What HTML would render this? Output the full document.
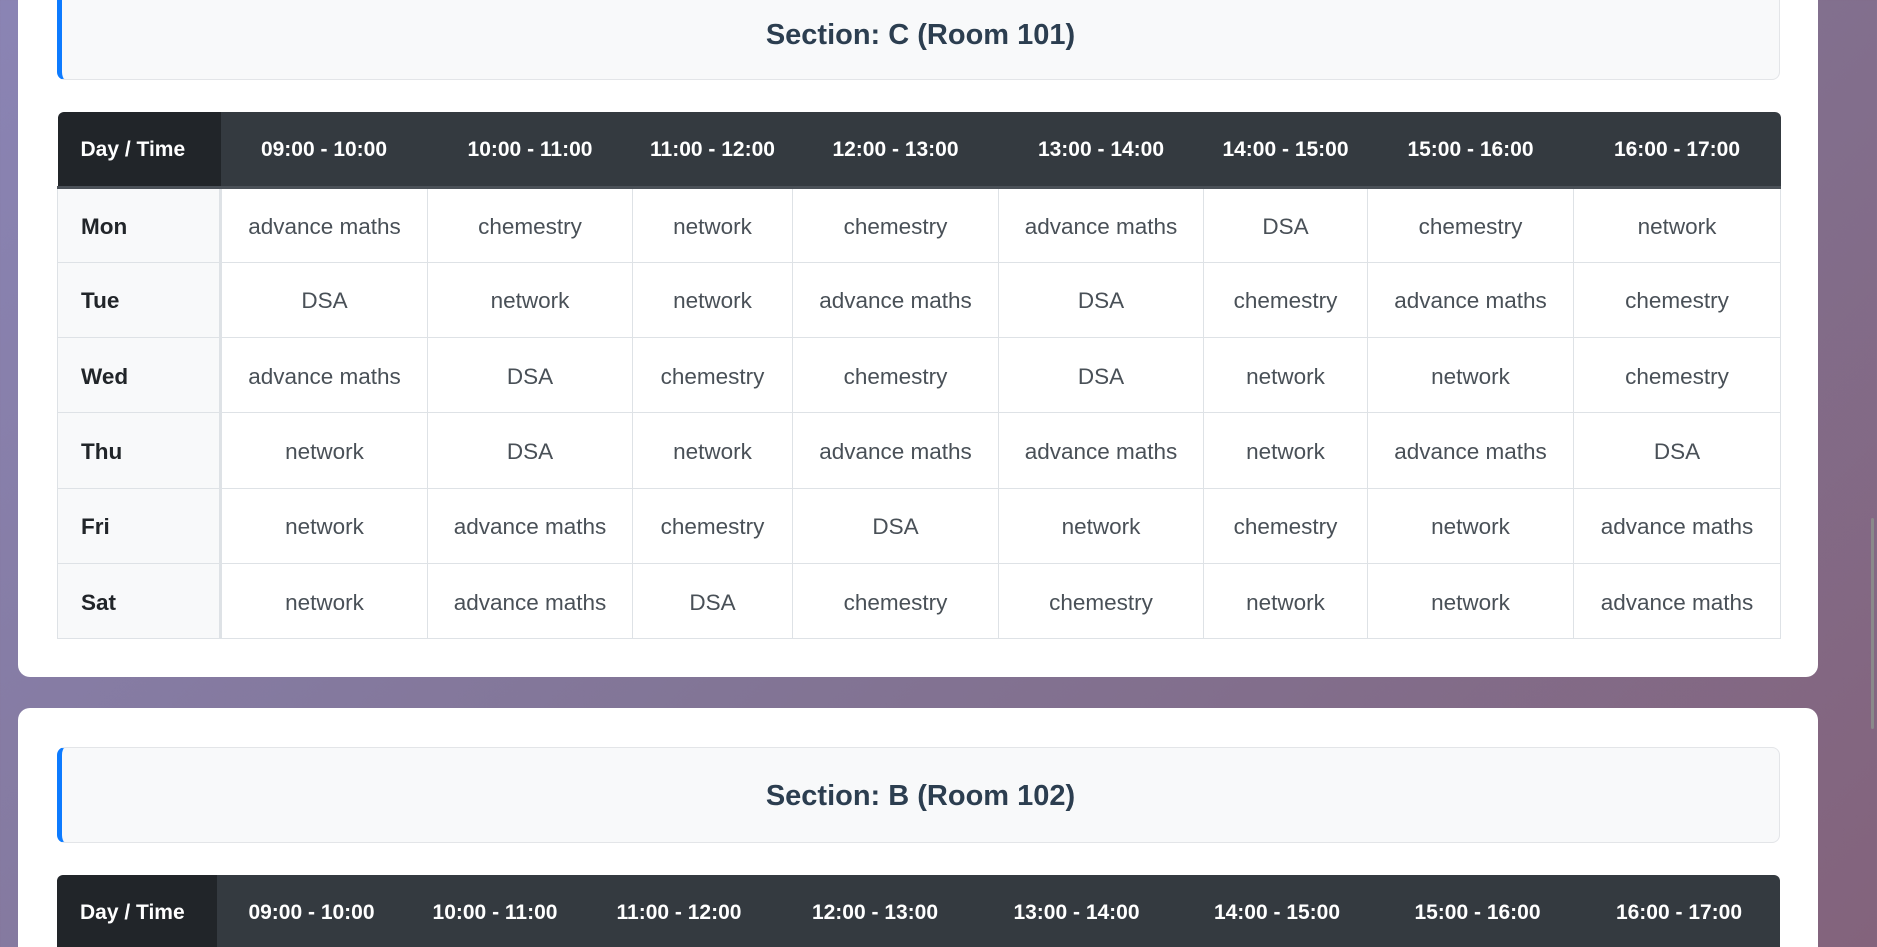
<!DOCTYPE html>
<html><head><meta charset="utf-8"><style>
*{box-sizing:border-box;margin:0;padding:0}
html,body{width:1877px;height:947px;overflow:hidden}
body{background:linear-gradient(135deg,#8a84b4 0%,#827596 50%,#83637c 100%);font-family:"Liberation Sans",sans-serif;position:relative}
.card{position:absolute;left:18px;width:1800px;background:#fff;border-radius:12px}
.hdr{position:absolute;left:57px;width:1723px;background:#f8f9fa;border:1px solid #e3e5e8;border-left:5px solid #0d7bff;border-radius:8px;color:#2c3e50;font-size:29px;font-weight:bold;text-align:center}
table{position:absolute;left:57px;width:1723px;border-collapse:collapse;table-layout:fixed}
th{background:#343a40;color:#fff;font-size:21px;font-weight:bold;height:75px;text-align:center;border-bottom:3px solid #4b5158;padding-top:2px}
th.d{background:#212529;text-align:left;padding-left:23px}
td{height:75.3px;border:1px solid #dee2e6;text-align:center;font-size:22.5px;color:#495057;padding-top:3px}
td.d{background:#f8f9fa;text-align:left;padding-left:23px;font-weight:bold;color:#212529;border-right:3px solid #dee2e6}
.sb{position:absolute;left:1871px;top:518px;width:3px;height:211px;background:#8a8a8a;border-radius:2px}
</style></head><body>
<div class="card" style="top:-20px;height:697px"></div>
<div class="hdr" style="top:-20px;height:100px;line-height:108px;border-top-left-radius:0;border-top-right-radius:0">Section: C (Room 101)</div>
<table style="top:112px">
<colgroup><col style="width:163px"><col style="width:207px"><col style="width:205px"><col style="width:160px"><col style="width:206px"><col style="width:205px"><col style="width:164px"><col style="width:206px"><col style="width:207px"></colgroup>
<tr><th class="d" style="border-top-left-radius:6px">Day / Time</th><th>09:00 - 10:00</th><th>10:00 - 11:00</th><th>11:00 - 12:00</th><th>12:00 - 13:00</th><th>13:00 - 14:00</th><th>14:00 - 15:00</th><th>15:00 - 16:00</th><th style="border-top-right-radius:6px">16:00 - 17:00</th></tr>
<tr><td class="d">Mon</td><td>advance maths</td><td>chemestry</td><td>network</td><td>chemestry</td><td>advance maths</td><td>DSA</td><td>chemestry</td><td>network</td></tr>
<tr><td class="d">Tue</td><td>DSA</td><td>network</td><td>network</td><td>advance maths</td><td>DSA</td><td>chemestry</td><td>advance maths</td><td>chemestry</td></tr>
<tr><td class="d">Wed</td><td>advance maths</td><td>DSA</td><td>chemestry</td><td>chemestry</td><td>DSA</td><td>network</td><td>network</td><td>chemestry</td></tr>
<tr><td class="d">Thu</td><td>network</td><td>DSA</td><td>network</td><td>advance maths</td><td>advance maths</td><td>network</td><td>advance maths</td><td>DSA</td></tr>
<tr><td class="d">Fri</td><td>network</td><td>advance maths</td><td>chemestry</td><td>DSA</td><td>network</td><td>chemestry</td><td>network</td><td>advance maths</td></tr>
<tr><td class="d">Sat</td><td>network</td><td>advance maths</td><td>DSA</td><td>chemestry</td><td>chemestry</td><td>network</td><td>network</td><td>advance maths</td></tr>
</table>
<div class="card" style="top:708px;height:400px"></div>
<div class="hdr" style="top:747px;height:96px;line-height:96px">Section: B (Room 102)</div>
<table style="top:875px">
<colgroup><col style="width:160px"><col style="width:189px"><col style="width:178px"><col style="width:190px"><col style="width:202px"><col style="width:201px"><col style="width:200px"><col style="width:201px"><col style="width:202px"></colgroup>
<tr><th class="d" style="border-top-left-radius:6px">Day / Time</th><th>09:00 - 10:00</th><th>10:00 - 11:00</th><th>11:00 - 12:00</th><th>12:00 - 13:00</th><th>13:00 - 14:00</th><th>14:00 - 15:00</th><th>15:00 - 16:00</th><th style="border-top-right-radius:6px">16:00 - 17:00</th></tr>
</table>
<div class="sb"></div>
</body></html>
